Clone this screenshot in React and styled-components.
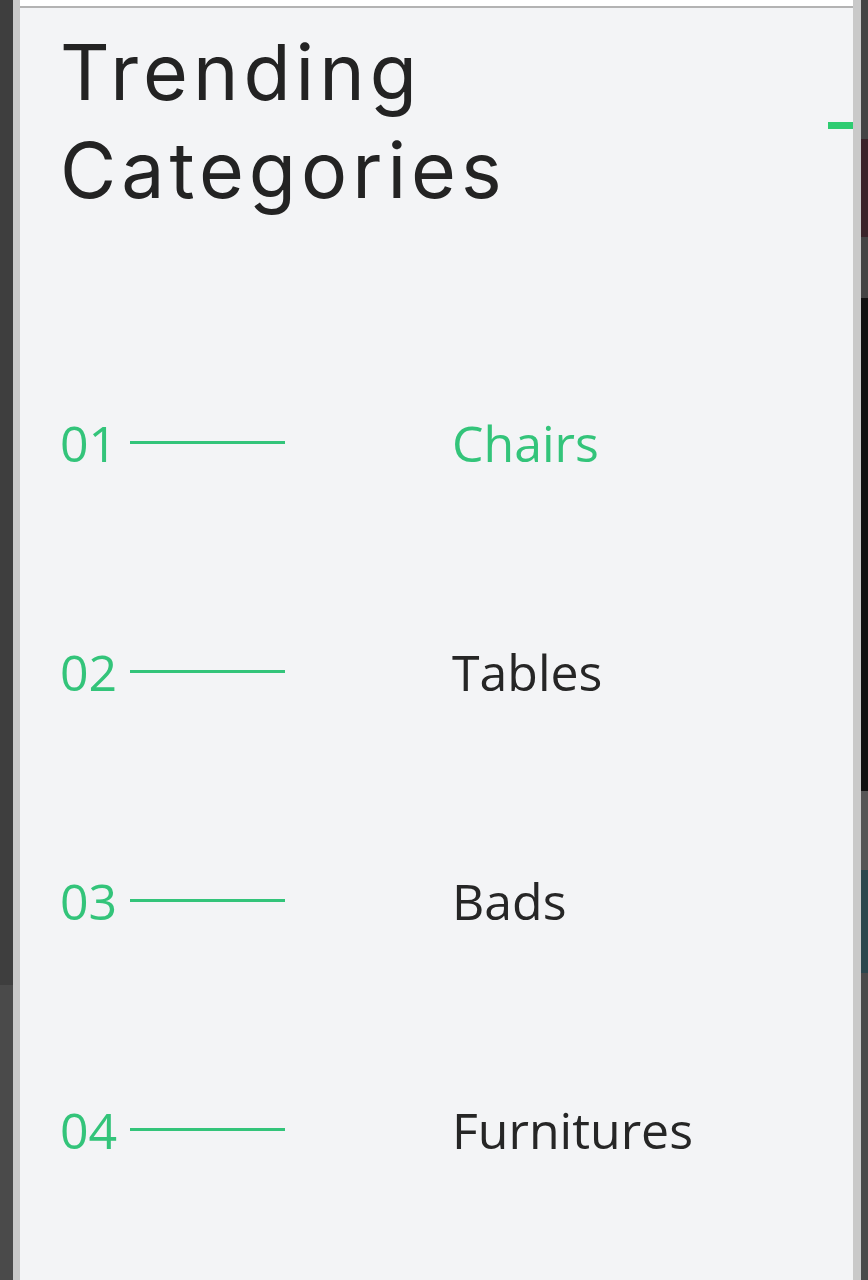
import React from "react";
import styled, { createGlobalStyle } from "styled-components";

const categories = [
  { num: "01", name: "Chairs", active: true },
  { num: "02", name: "Tables" },
  { num: "03", name: "Bads" },
  { num: "04", name: "Furnitures" },
];

const leftRail = [
  { h: 985, c: "#3e3e3e" },
  { h: 295, c: "#4a4a4a" },
];

const rightRail = [
  { h: 139, c: "#444444" },
  { h: 98, c: "#3a2329" },
  { h: 61, c: "#444444" },
  { h: 493, c: "#111111" },
  { h: 79, c: "#555555" },
  { h: 103, c: "#2b464d" },
  { h: 307, c: "#4a4a4a" },
];

export default function App() {
  return (
    <>
      <GlobalStyle />
      <Screen>
        <Rail $width={13}>
          {leftRail.map((s, i) => (
            <RailPart key={i} $h={s.h} $c={s.c} />
          ))}
        </Rail>
        <Drawer>
          <TopBar />
          <Panel>
            <Heading>
              Trending
              <br />
              Categories
            </Heading>
            <Dash />
            <List>
              {categories.map(cat => (
                <Row key={cat.num}>
                  <Index>
                    <Num>{cat.num}</Num>
                    <Line />
                  </Index>
                  <Name $active={cat.active}>{cat.name}</Name>
                </Row>
              ))}
            </List>
          </Panel>
        </Drawer>
        <Rail $width={7}>
          {rightRail.map((s, i) => (
            <RailPart key={i} $h={s.h} $c={s.c} />
          ))}
        </Rail>
      </Screen>
    </>
  );
}

const GlobalStyle = createGlobalStyle`
  html, body {
    margin: 0;
    padding: 0;
    background: #444;
  }
  * {
    box-sizing: border-box;
  }
`;

const Screen = styled.div`
  display: flex;
  width: 868px;
  height: 1280px;
  overflow: hidden;
`;

const Rail = styled.div`
  width: ${props => props.$width}px;
  flex-shrink: 0;
  display: flex;
  flex-direction: column;
`;

const RailPart = styled.div`
  height: ${props => props.$h}px;
  background: ${props => props.$c};
`;

const Drawer = styled.div`
  flex: 1;
  display: flex;
  flex-direction: column;
  border-left: 7px solid #c9c9c9;
  border-right: 8px solid #c9c9c9;
  background: #f3f4f6;
`;

const TopBar = styled.div`
  height: 8px;
  background: #ffffff;
  border-bottom: 2px solid #b3b3b3;
`;

const Panel = styled.div`
  position: relative;
  flex: 1;
  padding: 15px 0 0 40px;
  background: #f3f4f6;
`;

const Heading = styled.h2`
  margin: 0;
  font-family: Inter, "Liberation Sans", sans-serif;
  font-weight: 400;
  font-size: 77px;
  line-height: 98px;
  letter-spacing: 5px;
  color: #232323;
`;

const Dash = styled.span`
  position: absolute;
  top: 114px;
  right: 0;
  width: 25px;
  height: 7px;
  background: #2ecc71;
`;

const List = styled.ul`
  list-style: none;
  margin: 0;
  padding: 190px 0 0;
  display: flex;
  flex-direction: column;
  gap: 160px;
`;

const Row = styled.li`
  display: grid;
  grid-template-columns: 392px 1fr;
  align-items: center;
  height: 69px;
`;

const Index = styled.div`
  display: flex;
  align-items: center;
  gap: 13px;
`;

const Num = styled.span`
  font-family: "Open Sans", "Noto Sans", sans-serif;
  font-size: 50px;
  line-height: 69px;
  color: #33c47a;
`;

const Line = styled.span`
  display: block;
  width: 155px;
  height: 3px;
  margin-top: -2px;
  background: #33c47a;
`;

const Name = styled.span`
  font-family: "Open Sans", "Noto Sans", sans-serif;
  font-size: 50px;
  line-height: 69px;
  color: ${props => (props.$active ? "#33c47a" : "#262626")};
`;
